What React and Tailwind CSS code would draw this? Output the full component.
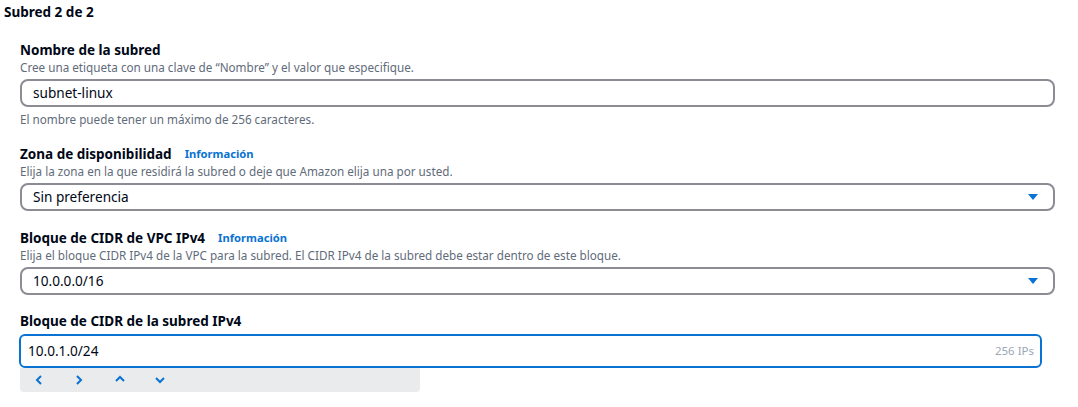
import React from 'react';

const font = { fontFamily: '"Noto Sans", "Open Sans", Arial, sans-serif' };

const Caret = () => (
  <svg width="12" height="8" viewBox="0 0 12 8" className="shrink-0">
    <path d="M1 1h10L6 7z" fill="#0972d3" />
  </svg>
);

const Chevron = ({ dir }) => {
  const paths = {
    left: 'M6 1L2 5l4 4',
    right: 'M2 1l4 4-4 4',
    up: 'M1 6l4-4 4 4',
    down: 'M1 3l4 4 4-4',
  };
  return (
    <svg width="10" height="10" viewBox="0 0 10 10">
      <path d={paths[dir]} fill="none" stroke="#0972d3" strokeWidth="2" />
    </svg>
  );
};

const Label = ({ children, info }) => (
  <div className="flex items-center h-[18px] text-[13.5px] font-bold text-[#000716] leading-[18px]">
    <span>{children}</span>
    {info && <span className="ml-[13px] text-[11.2px] text-[#0972d3]">Información</span>}
  </div>
);

const Desc = ({ children }) => (
  <div className="text-[11.7px] leading-[16px] text-[#5f6b7a]">{children}</div>
);

const SelectBox = ({ value }) => (
  <div className="mt-[4px] flex h-[28px] items-center justify-between rounded-[8px] border-2 border-[#8c8c94] pl-[11px] pr-[14px] text-[13.6px] text-[#000716]">
    <span>{value}</span>
    <Caret />
  </div>
);

export default function App() {
  return (
    <div className="min-h-[407px] bg-white pt-[3px]" style={font}>
      <div className="pl-[4px] text-[13.5px] font-bold leading-[18px] text-[#000716]">Subred 2 de 2</div>

      <div className="mt-[20px] pl-[20px] pr-[23px]">
        <Label>Nombre de la subred</Label>
        <Desc>Cree una etiqueta con una clave de “Nombre” y el valor que especifique.</Desc>
        <div className="mt-[4px] flex h-[28px] items-center rounded-[8px] border-2 border-[#8c8c94] pl-[11px] text-[13.6px] text-[#000716]">
          subnet-linux
        </div>
        <div className="mt-[4px]">
          <Desc>El nombre puede tener un máximo de 256 caracteres.</Desc>
        </div>

        <div className="mt-[18px]">
          <Label info>Zona de disponibilidad</Label>
          <Desc>Elija la zona en la que residirá la subred o deje que Amazon elija una por usted.</Desc>
          <SelectBox value="Sin preferencia" />
        </div>

        <div className="mt-[18px]">
          <Label info>Bloque de CIDR de VPC IPv4</Label>
          <Desc>Elija el bloque CIDR IPv4 de la VPC para la subred. El CIDR IPv4 de la subred debe estar dentro de este bloque.</Desc>
          <SelectBox value="10.0.0.0/16" />
        </div>

        <div className="mt-[17px]">
          <Label>Bloque de CIDR de la subred IPv4</Label>
          <div className="-ml-[1px] mr-[13px] mt-[4px] flex h-[34px] items-center justify-between rounded-[6px] border-2 border-[#0972d3] pl-[7px] pr-[6px] text-[13.6px] text-[#000716]">
            <span>10.0.1.0/24</span>
            <span className="text-[11.5px] text-[#9ba7b6]">256 IPs</span>
          </div>
          <div className="flex h-[24px] w-[400px] items-center gap-[30px] rounded-b-[4px] bg-[#e9ebed] pl-[15px]">
            <Chevron dir="left" />
            <Chevron dir="right" />
            <Chevron dir="up" />
            <Chevron dir="down" />
          </div>
        </div>
      </div>
    </div>
  );
}
